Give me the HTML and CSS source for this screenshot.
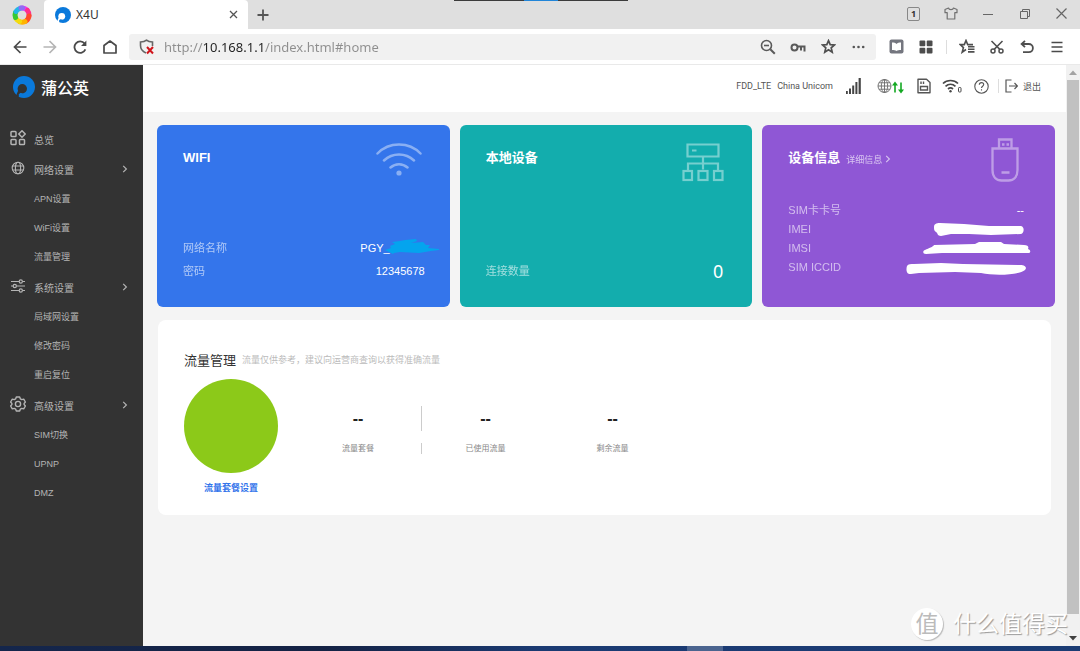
FILE: index.html
```html
<!DOCTYPE html>
<html lang="zh-CN">
<head>
<meta charset="utf-8">
<title>X4U</title>
<link rel="stylesheet" href="styles.css">
</head>
<body>
<div class="window">
  <header class="tabbar">
    <span class="browser-logo">
      <svg width="22" height="22" viewBox="0 0 22 22" fill="none" stroke-width="5" stroke-linecap="round">
        <path d="M11 4a7 7 0 0 1 5 2" stroke="#e63bf0"/>
        <path d="M16.500 6.500a7 7 0 0 1 1.500 5" stroke="#ff2f8a"/>
        <path d="M18 12a7 7 0 0 1-3 5" stroke="#ff4a2a"/>
        <path d="M14 17.500a7 7 0 0 1-5 .3" stroke="#ffb400"/>
        <path d="M8.500 17.500a7 7 0 0 1-3.500-3" stroke="#f2dc10"/>
        <path d="M4.500 13.500a7 7 0 0 1 0-5" stroke="#35c934"/>
        <path d="M5 7.500a7 7 0 0 1 4-3.200" stroke="#22b6e8"/>
        <path d="M10 4a7 7 0 0 1 1.500 0" stroke="#8f6cf5"/>
      </svg>
    </span>
    <div class="tab">
      <svg width="16" height="16" viewBox="0 0 22 22"><use href="#pgy"/></svg>
      <span class="tab-title">X4U</span>
      <button class="tab-close" aria-label="关闭标签页"><svg width="9" height="9" viewBox="0 0 9 9"><path d="M1 1l7 7M8 1l-7 7" stroke="#555" stroke-width="1.300"/></svg></button>
    </div>
    <button class="tab-add" aria-label="新建标签页"><svg width="12" height="12" viewBox="0 0 12 12"><path d="M6 0.500v11M0.500 6h11" stroke="#555" stroke-width="1.800"/></svg></button>
    <span class="top-marker"></span>
    <div class="window-buttons">
      <button class="win" aria-label="标签数"><span class="count">1</span></button>
      <button class="win" aria-label="皮肤"><svg width="14" height="13" viewBox="0 0 14 13" fill="none" stroke="#707070" stroke-width="1.200" stroke-linejoin="round"><path d="M4.500 1L1 2.500v3.200h2.200V12h7.600V5.700H13V2.500L9.500 1C9 3.200 5 3.200 4.500 1z"/></svg></button>
      <button class="win" aria-label="最小化"><svg width="10" height="10" viewBox="0 0 10 10"><path d="M0 5.500h10" stroke="#666"/></svg></button>
      <button class="win" aria-label="还原"><svg width="10" height="10" viewBox="0 0 10 10" fill="none" stroke="#666"><path d="M.5 2.500h7v7h-7zM2.500 2.500v-2h7v7h-2"/></svg></button>
      <button class="win" aria-label="关闭"><svg width="11" height="11" viewBox="0 0 11 11"><path d="M.5.5l10 10M10.500.5l-10 10" stroke="#666" stroke-width="1.200"/></svg></button>
    </div>
  </header>

  <div class="toolbar">
    <button class="tool" aria-label="后退"><svg width="14" height="14" viewBox="0 0 14 14" fill="none" stroke="#4a4a4a" stroke-width="1.700"><path d="M13.500 7H1.500M7.500 1L1.500 7l6 6"/></svg></button>
    <button class="tool" aria-label="前进"><svg width="14" height="14" viewBox="0 0 14 14" fill="none" stroke="#b5b5b5" stroke-width="1.700"><path d="M.5 7h12M6.500 1l6 6-6 6"/></svg></button>
    <button class="tool" aria-label="刷新"><svg width="14" height="14" viewBox="0 0 14 14" fill="none" stroke="#4a4a4a" stroke-width="1.800"><path d="M12.400 9.400A5.700 5.700 0 1 1 11.600 3.500"/><path d="M13.400.5v5.400H8z" fill="#4a4a4a" stroke="none"/></svg></button>
    <button class="tool" aria-label="主页"><svg width="14" height="14" viewBox="0 0 14 14" fill="none" stroke="#4a4a4a" stroke-width="1.700" stroke-linejoin="round"><path d="M1 5.500L7 1l6 4.500V13H1z"/></svg></button>
    <div class="address">
      <svg class="shield" width="16" height="16" viewBox="0 0 16 16" fill="none"><path d="M7 14C3.500 12.500 1.500 10 1.500 6.500V3C4 3 6 2.500 7.500 1.200 9 2.500 11 3 13.500 3v4" stroke="#666" stroke-width="1.600"/><path d="M8 8l6 6.500M14 8l-6 6.500" stroke="#d0151c" stroke-width="2"/></svg>
      <input class="url" type="text" aria-label="地址" value="http://10.168.1.1/index.html#home">
      <button class="tool" aria-label="缩小"><svg width="16" height="16" viewBox="0 0 16 16" fill="none" stroke="#5a5a5a" stroke-width="1.600"><circle cx="6.500" cy="6.500" r="5"/><path d="M4 6.500h5"/><path d="M10.300 10.300l4.500 4.500" stroke-width="2"/></svg></button>
      <button class="tool" aria-label="密码"><svg width="16" height="12" viewBox="0 0 16 12" fill="none" stroke="#5a5a5a" stroke-width="2"><circle cx="4.500" cy="6.500" r="3"/><path d="M7.500 5.500h8M14.500 5.500v5M11 5.500v4"/></svg></button>
      <button class="tool" aria-label="收藏"><svg width="15" height="15" viewBox="0 0 15 15" fill="none" stroke="#4f4f4f" stroke-width="1.700"><path d="M7.500 1.700l1.700 4 4.300.3-3.300 2.800 1 4.300-3.700-2.300-3.700 2.300 1-4.300L1.500 6l4.300-.3z"/></svg></button>
      <button class="tool" aria-label="更多"><svg width="13" height="4" viewBox="0 0 13 4" fill="#555"><circle cx="1.800" cy="2" r="1.300"/><circle cx="6.500" cy="2" r="1.300"/><circle cx="11.200" cy="2" r="1.300"/></svg></button>
    </div>
    <button class="tool" aria-label="阅读"><svg width="15" height="15" viewBox="0 0 15 15"><rect x=".5" y=".5" width="14" height="14" rx="2" fill="#74767f"/><path d="M3 3.500c2 0 3.500.3 4.500 1.500 1-1.200 2.500-1.500 4.500-1.500v7.500c-2 0-3.500.2-4.500 1-1-.8-2.500-1-4.500-1z" fill="#fff"/></svg></button>
    <button class="tool" aria-label="应用"><svg width="14" height="14" viewBox="0 0 14 14" fill="#4c4c4c"><rect x=".5" y=".5" width="5.800" height="5.800" rx="1"/><rect x="7.700" y=".5" width="5.800" height="5.800" rx="1"/><rect x=".5" y="7.700" width="5.800" height="5.800" rx="1"/><rect x="7.700" y="7.700" width="5.800" height="5.800" rx="1"/></svg></button>
    <span class="tool-divider"></span>
    <button class="tool" aria-label="收藏夹"><svg width="16" height="15" viewBox="0 0 16 15" fill="none" stroke="#4f4f4f" stroke-width="1.600"><path d="M14 5.600H8.700L7 1.500 5.300 5.600H1.200l3.200 3-1.200 4.600L7 10.500"/><path d="M9 7.700h6.500M9 10.300h6.500M9 12.900h6.500"/></svg></button>
    <button class="tool" aria-label="截图"><svg width="14" height="14" viewBox="0 0 14 14" fill="none" stroke="#4f4f4f" stroke-width="1.500"><circle cx="3" cy="11" r="2"/><circle cx="11" cy="11" r="2"/><path d="M4.200 9.400L12.500 1M9.800 9.400L1.500 1"/></svg></button>
    <button class="tool" aria-label="撤销"><svg width="14" height="14" viewBox="0 0 14 14" fill="none" stroke="#4f4f4f" stroke-width="1.800"><path d="M2 4h6.800a4 4 0 0 1 0 8.200H3"/><path d="M5 .8L1.600 4 5 7.200"/></svg></button>
    <button class="tool" aria-label="菜单"><svg width="12" height="12" viewBox="0 0 12 12"><path d="M.5 1.500h11M.5 6h11M.5 10.500h11" stroke="#4a4a4a" stroke-width="1.600"/></svg></button>
  </div>

  <div class="page">
    <aside class="sidebar">
      <div class="brand">
        <svg width="22" height="22" viewBox="0 0 22 22">
          <mask id="pgy-cut"><circle cx="11" cy="11" r="11" fill="#fff"/><circle cx="9.300" cy="12.800" r="4.700" fill="#000"/><path d="M6.500 15L3.500 22" stroke="#000" stroke-width="2.800"/><ellipse cx="8" cy="19" rx="2.400" ry="1.700" fill="#fff"/></mask>
          <g id="pgy"><rect width="22" height="22" fill="#0a79db" mask="url(#pgy-cut)"/></g>
        </svg>
        <span>蒲公英</span>
      </div>
      <nav>
        <ul class="menu">
          <li><a class="item" href="#home"><svg width="16" height="16" viewBox="0 0 16 16" fill="none" stroke="#b4b4b4" stroke-width="1.500"><rect x="1" y="1.500" width="5" height="5" rx=".8"/><rect x="1" y="9.500" width="5" height="5" rx=".8"/><rect x="9.500" y="9.500" width="5" height="5" rx=".8"/><path d="M12 .8l3.200 3.200L12 7.200 8.800 4z"/></svg><span>总览</span></a></li>
          <li>
            <a class="item" href="#network"><svg width="16" height="16" viewBox="0 0 16 16" fill="none" stroke="#b4b4b4" stroke-width="1.100"><circle cx="8" cy="8" r="5.800"/><ellipse cx="8" cy="8" rx="2.600" ry="5.800"/><path d="M2.500 6h11M2.500 10h11"/></svg><span>网络设置</span><svg class="chev" width="6" height="8" viewBox="0 0 6 8"><use href="#chevron"/></svg></a>
            <ul class="sub"><li><a href="#apn">APN设置</a></li><li><a href="#wifi">WiFi设置</a></li><li><a href="#traffic">流量管理</a></li></ul>
          </li>
          <li>
            <a class="item" href="#system"><svg width="16" height="16" viewBox="0 0 16 16" fill="none" stroke="#b4b4b4" stroke-width="1.200"><path d="M1 3.500h8M12.500 3.500H15M1 8h2M6.500 8H15M1 12.500h8M12.500 12.500H15"/><circle cx="10.800" cy="3.500" r="1.600"/><circle cx="4.800" cy="8" r="1.600"/><circle cx="10.800" cy="12.500" r="1.600"/></svg><span>系统设置</span><svg class="chev" width="6" height="8" viewBox="0 0 6 8"><use href="#chevron"/></svg></a>
            <ul class="sub"><li><a href="#lan">局域网设置</a></li><li><a href="#password">修改密码</a></li><li><a href="#reset">重启复位</a></li></ul>
          </li>
          <li>
            <a class="item" href="#advanced"><svg width="16" height="16" viewBox="0 0 16 16" fill="none" stroke="#b4b4b4" stroke-width="1.400" stroke-linejoin="round"><path d="M6.300 1h3.400l.6 1.800 1.500.8 1.900-.5 1.700 2.900-1.300 1.400v1.200l1.300 1.400-1.700 2.900-1.900-.5-1.500.8-.6 1.800H6.300l-.6-1.800-1.500-.8-1.900.5L.6 10l1.300-1.400V7.400L.6 6l1.700-2.900 1.900.5 1.500-.8z"/><circle cx="8" cy="8" r="2.600"/></svg><span>高级设置</span><svg class="chev" width="6" height="8" viewBox="0 0 6 8"><path id="chevron" d="M1.200.8L4.400 4 1.200 7.200" fill="none" stroke="#b4b4b4" stroke-width="1.200"/></svg></a>
            <ul class="sub"><li><a href="#sim">SIM切换</a></li><li><a href="#upnp">UPNP</a></li><li><a href="#dmz">DMZ</a></li></ul>
          </li>
        </ul>
      </nav>
    </aside>

    <main class="main">
      <div class="status">
        <span class="net">FDD_LTE</span>
        <span class="carrier">China Unicom</span>
        <svg class="signal" width="17" height="16" viewBox="0 0 17 16" fill="#454545"><rect x="1" y="13" width="1.800" height="3"/><rect x="4" y="10.500" width="2" height="5.500"/><rect x="7.200" y="7.500" width="2" height="8.500"/><rect x="10.400" y="4" width="2" height="12"/><rect x="13.600" y="0" width="2.200" height="16"/></svg>
        <svg class="globe" width="27" height="16" viewBox="0 0 27 16" fill="none"><g stroke="#6a6a6a" stroke-width=".9"><circle cx="7.500" cy="8" r="6.500"/><ellipse cx="7.500" cy="8" rx="3.200" ry="6.500"/><path d="M7.500 1.500v13M1 8h13M2 4.800h11M2 11.200h11"/></g><path d="M18 14.500V6M24 4.500V13" stroke="#13a822" stroke-width="1.600"/><path d="M15 7.500l3-4 3 4zM21 11.500l3 4 3-4z" fill="#13a822"/></svg>
        <svg class="sim" width="14" height="16" viewBox="0 0 14 16" fill="none" stroke="#555" stroke-width="1.400"><path d="M1 1.200h8.500L13 4.500v10.300H1z" stroke-linejoin="round"/><path d="M4 3.500v2.500M6.500 3.500v2.500M3.500 8.500h7v3.500h-7z"/></svg>
        <svg class="wifi" width="20" height="16" viewBox="0 0 20 16" fill="none" stroke="#484848" stroke-width="1.700"><path d="M1 5.500C5 1.500 12 1.500 16 5.500M3.500 8.300c3-2.700 7-2.700 10 0M6 11c1.500-1.300 3.500-1.300 5 0"/><circle cx="8.500" cy="13.300" r="1.200" fill="#484848" stroke="none"/><rect x="16.500" y="9.500" width="2.500" height="4.500" rx=".8" stroke-width="1"/></svg>
        <svg class="help" width="15" height="15" viewBox="0 0 15 15" fill="none" stroke="#555" stroke-width="1.100"><circle cx="7.500" cy="7.500" r="6.700"/><path d="M5.300 5.800c0-3 4.400-2.800 4.400-.2 0 1.600-2.200 1.700-2.200 3.500M7.500 10.300v1.300"/></svg>
        <a class="logout" href="#logout"><svg width="13" height="14" viewBox="0 0 13 14" fill="none" stroke="#555" stroke-width="1.200"><path d="M6.500 1H1v12h5.500M4 7h8.300M9.500 4l3 3-3 3"/></svg><span>退出</span></a>
      </div>

      <div class="content">
        <section class="cards">
          <article class="card card-wifi">
            <div class="card-head"><h2>WIFI</h2>
              <svg width="46" height="34" viewBox="0 0 46 34" fill="none" stroke="#fff" stroke-width="2.500" stroke-linecap="round" opacity=".42"><path d="M1.500 10.500C13-1.500 33-1.500 44.500 10.500M8 17.500c8.500-8 21.500-8 30 0M14.500 24.500c5-4.500 12-4.500 17 0"/><circle cx="23" cy="30" r="2.600" fill="#fff" stroke="none"/></svg>
            </div>
            <dl class="rows">
              <div><dt>网络名称</dt><dd class="ssid">PGY_<svg class="smear" width="54" height="16" viewBox="0 0 54 16"><path d="M0 11l6-2-1-2 5-2-3-2 8-1 5-1 11-1 1 2-6 2 12-1 3 3 4 0-2 3 11 1v1l-8 1-12 2-19-1-6 1-1 1z" fill="#04a4ee"/></svg></dd></div>
              <div><dt>密码</dt><dd>12345678</dd></div>
            </dl>
          </article>
          <article class="card card-local">
            <div class="card-head"><h2>本地设备</h2>
              <svg width="42" height="39" viewBox="0 0 42 39" fill="none" stroke="#fff" stroke-width="2.200" opacity=".42"><path d="M5.500 1.500h31v12h-31zM10 7.500h4.500M21 13.500v13M6 27v-6.500h30V27"/><rect x="1.500" y="28" width="8.500" height="9"/><rect x="16.500" y="28" width="9" height="9"/><rect x="32" y="28" width="8.500" height="9"/></svg>
            </div>
            <dl class="rows"><div><dt>连接数量</dt><dd class="big">0</dd></div></dl>
          </article>
          <article class="card card-info">
            <div class="card-head"><h2>设备信息</h2><a class="detail" href="#detail">详细信息 <svg width="6" height="8" viewBox="0 0 6 8"><path d="M1.200.8L4.400 4 1.200 7.200" fill="none" stroke="#fff" stroke-width="1.100"/></svg></a>
              <svg width="28" height="44" viewBox="0 0 28 44" fill="none" stroke="#fff" stroke-width="2.300" opacity=".42"><path d="M1.500 10.500h25V32c0 7-4 10.500-9 10.500h-7c-5 0-9-3.500-9-10.500zM8 10.500v-9h12.500v9M10.500 34.500h8M11 6.500h2.500M15.500 6.500H18"/></svg>
            </div>
            <dl class="rows">
              <div><dt>SIM卡卡号</dt><dd>--</dd></div>
              <div><dt>IMEI</dt></div>
              <div><dt>IMSI</dt></div>
              <div><dt>SIM ICCID</dt></div>
              <svg class="strokes" width="126" height="54" viewBox="0 0 126 54" fill="#fff"><path d="M29 5c0-3 2-4 6-4l24 1 25 2 32 0c4 1 3 7 0 8l-30 1-22-1-18 0-10 2c-4 0-3-3-5-4-2-1-2-3-2-5zM20 28c4-2 8-3 9-5l41-1 4-2h22l3 2 20 1c4 0 5 2 4 4 3 1 3 4 0 4l-36 0-30 0-20 0-16 1c-4 0-3-4-1-4zM2 44c1-2 4-2 7-2l27-1 22 1 57 1c6 0 7 3 5 5-6 5-30 6-44 3l-26-1-36 1-8 1c-5 1-5-5-4-8z"/></svg>
            </dl>
          </article>
        </section>

        <section class="panel">
          <div class="panel-head"><h2>流量管理</h2><span>流量仅供参考，建议向运营商查询以获得准确流量</span></div>
          <div class="panel-body">
            <div class="plan"><div class="pie"></div><a href="#plan">流量套餐设置</a></div>
            <dl class="stats">
              <div><dd>--</dd><dt>流量套餐</dt></div>
              <div><dd>--</dd><dt>已使用流量</dt></div>
              <div><dd>--</dd><dt>剩余流量</dt></div>
            </dl>
          </div>
        </section>
      </div>
    </main>

    <div class="scrollbar">
      <svg width="8" height="5" viewBox="0 0 8 5"><path d="M0 5l4-4.500L8 5z" fill="#a3a3a3"/></svg>
      <span class="thumb"></span>
      <svg width="8" height="5" viewBox="0 0 8 5"><path d="M0 0l4 4.500L8 0z" fill="#404040"/></svg>
    </div>

    <div class="watermark"><span class="seal">值</span><span>什么值得买</span></div>
  </div>

  <footer class="taskbar"><span class="task"></span></footer>
</div>
</body>
</html>
```

FILE: styles.css
```css
* { box-sizing: border-box; }
body, h2, ul, dl, dd { margin: 0; padding: 0; }
ul { list-style: none; }
a { color: inherit; text-decoration: none; }
svg { display: block; flex: none; }
button { border: 0; padding: 0; background: none; font: inherit; color: inherit; }

body {
  font-family: "Liberation Sans", "Noto Sans CJK SC", sans-serif;
  font-size: 11px;
  color: #333;
}
.window { min-height: 100vh; display: flex; flex-direction: column; }

/* browser tabs */
.tabbar { position: relative; display: flex; height: 29px; background: #dfdfdf; }
.browser-logo { width: 44px; display: flex; align-items: center; justify-content: center; }
.tab {
  width: 204px;
  display: flex;
  align-items: center;
  gap: 5px;
  padding: 0 10px 0 11px;
  background: #fff;
  border-radius: 4px 4px 0 0;
  font: 12px "Noto Sans", sans-serif;
}
.tab-close { margin-left: auto; }
.tab-add { width: 30px; display: flex; align-items: center; justify-content: center; }
.top-marker {
  position: absolute;
  top: 0;
  left: 42%;
  width: 174px;
  height: 1px;
  background: linear-gradient(90deg, #3c3c3c 40%, #2185d8 40% 60%, #3c3c3c 60%);
}
.window-buttons { display: flex; margin-left: auto; }
.win { width: 37px; height: 27px; display: flex; align-items: center; justify-content: center; }
.count {
  width: 13px;
  height: 14px;
  border: 1px solid #888;
  border-radius: 2px;
  font: bold 9px/12px "Noto Sans", sans-serif;
}

/* browser toolbar */
.toolbar {
  display: flex;
  align-items: center;
  height: 36px;
  padding: 0 8px 0 5px;
  border-bottom: 1px solid #e9e9e9;
  background: #fff;
}
.tool { width: 30px; height: 26px; display: flex; align-items: center; justify-content: center; }
.address {
  flex: 1;
  display: flex;
  align-items: center;
  height: 26px;
  margin: 0 5px 0 4px;
  padding: 0 3px 0 10px;
  border-radius: 3px;
  background: #f1f1f1;
}
.url {
  flex: 1;
  min-width: 0;
  margin-left: 9px;
  padding: 0;
  border: 0;
  font: 13px "Noto Sans", sans-serif;
  color: transparent;
  background: linear-gradient(90deg, #8e8e8e 40px, #222 40px 100px, #8e8e8e 100px);
  background-clip: text;
  -webkit-background-clip: text;
}
.tool-divider { width: 1px; height: 14px; margin: 0 5px; background: #ddd; }

/* page frame */
.page { position: relative; flex: 1; display: flex; background: #f4f4f4; }
.sidebar { width: 143px; flex: none; background: #333; color: #b4b4b4; }
.brand {
  display: flex;
  align-items: center;
  gap: 6px;
  height: 44px;
  padding-left: 13px;
  color: #fff;
  font-size: 16px;
  font-weight: 500;
}
.menu { display: flex; flex-direction: column; gap: 1px; padding-top: 16px; }
.item { display: flex; align-items: center; height: 29px; padding: 0 15px 0 10px; font-size: 10px; }
.item svg { margin-bottom: 3px; }
.item span { margin-left: 8px; }
.item .chev { margin: 0 0 1px auto; }
.sub { padding-top: 1px; }
.sub a { display: block; padding-left: 34px; font-size: 9px; line-height: 29px; }

.main { flex: 1; min-width: 0; }
.status {
  display: flex;
  align-items: center;
  justify-content: flex-end;
  height: 47px;
  padding: 0 25px 5px 0;
  background: #fff;
  color: #555;
  font: 9px Roboto, "Noto Sans CJK SC", sans-serif;
}
.carrier { margin: 0 12px 0 6px; }
.globe { margin: 0 13px 0 15px; }
.wifi { margin: 0 12px 0 11px; }
.logout {
  display: flex;
  align-items: center;
  gap: 5px;
  margin-left: 9px;
  padding-left: 6px;
  border-left: 1px solid #ddd;
}

.content { padding: 13px 11px 20px 14px; }
.cards { display: grid; grid-template-columns: repeat(3, 1fr); gap: 10px; }
.card {
  display: flex;
  flex-direction: column;
  min-height: 182px;
  border-radius: 6px;
  color: #fff;
}
.card-wifi { background: #3475eb; padding: 18px 25px 24px 26px; }
.card-local { background: #13adad; padding: 18px 28px 24px 26px; }
.card-info { background: #8f57d5; padding: 13px 31px 30px 26px; }
.card-head { display: flex; align-items: flex-start; }
.card-head > svg { margin: 0 3px 0 auto; }
.card-local .card-head > svg { margin-right: 0; }
.card-info .card-head > svg { margin-right: 5px; }
.card h2 { font-size: 13px; line-height: 30px; }
.card-info h2 { line-height: 40px; }
.detail {
  display: flex;
  align-items: center;
  gap: 3px;
  height: 42px;
  margin-left: 6px;
  font-size: 9px;
  opacity: 0.65;
}
.rows { position: relative; margin-top: auto; line-height: 23px; }
.rows > div { display: flex; justify-content: space-between; }
.rows dt { opacity: 0.6; }
.card-info .rows { line-height: 19px; }
.card-info .rows > div { height: 19px; }
.ssid { position: relative; padding-right: 35px; }
.smear { position: absolute; top: 2px; right: -14px; }
.big { font: 18px/23px "Noto Sans", sans-serif; }
.card-local .big { padding-right: 1px; }
.strokes { position: absolute; top: 21px; right: -7px; }

.panel {
  margin: 13px 4px 0 1px;
  padding: 26px 26px 12px;
  min-height: 195px;
  border-radius: 8px;
  background: #fff;
}
.panel-head { display: flex; align-items: center; gap: 6px; height: 27px; }
.panel-head h2 { font-size: 13px; font-weight: 400; }
.panel-head span { font-size: 9px; color: #bbb; }
.panel-body { display: flex; gap: 17px; padding-top: 6px; }
.plan { text-align: center; font-size: 9px; font-weight: 700; line-height: 30px; color: #3475eb; }
.pie { width: 94px; height: 94px; border-radius: 50%; background: #8cc919; }
.stats { display: flex; padding-top: 27px; text-align: center; }
.stats > div { width: 127px; }
.stats dd { height: 25px; font-size: 16px; font-weight: 700; line-height: 25px; color: #222; }
.stats dt { height: 11px; margin-top: 12px; font-size: 8px; line-height: 11px; color: #888; }
.stats > div:first-child > * { border-right: 1px solid #ccc; }

.scrollbar {
  width: 14px;
  flex: none;
  display: flex;
  flex-direction: column;
  align-items: center;
  padding: 5px 0;
  background: #f1f1f1;
}
.thumb { flex: 1; width: 12px; margin: 5px 0 22px; background: #c1c1c1; }

.watermark {
  position: absolute;
  right: 12px;
  bottom: 6px;
  display: flex;
  align-items: center;
  gap: 10px;
  color: #fff;
  font-size: 23px;
  line-height: 32px;
  text-shadow: 1px 1px 1px #999;
}
.seal {
  width: 32px;
  height: 32px;
  border-radius: 50%;
  background: #fff;
  box-shadow: 1px 1px 1px #bbb;
  color: #bbb;
  text-align: center;
  text-shadow: none;
}

.taskbar { height: 5px; background: linear-gradient(90deg, #14264c, #142244 30%, #1a3a72 50%, #1b3c74); }
.task { display: block; width: 36px; height: 5px; margin-left: 687px; background: #4b648f; }
```
